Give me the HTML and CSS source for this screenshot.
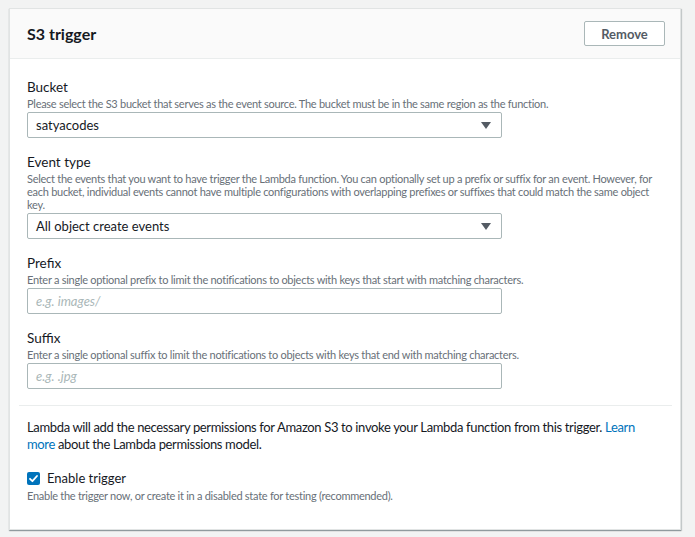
FILE: index.html
```html
<!DOCTYPE html>
<html>
<head>
<meta charset="utf-8">
<link rel="stylesheet" href="styles.css">
</head>
<body>
<div class="card">
  <div class="card-header">
    <h2 class="title">S3 trigger</h2>
    <button class="btn">Remove</button>
  </div>
  <div class="card-body">
    <div class="field">
      <div class="label">Bucket</div>
      <div class="desc">Please select the S3 bucket that serves as the event source. The bucket must be in the same region as the function.</div>
      <div class="select"><span>satyacodes</span><span class="caret"></span></div>
    </div>
    <div class="field">
      <div class="label">Event type</div>
      <div class="desc">Select the events that you want to have trigger the Lambda function. You can optionally set up a prefix or suffix for an event. However, for each bucket, individual events cannot have multiple configurations with overlapping prefixes or suffixes that could match the same object key.</div>
      <div class="select"><span>All object create events</span><span class="caret"></span></div>
    </div>
    <div class="field">
      <div class="label">Prefix</div>
      <div class="desc">Enter a single optional prefix to limit the notifications to objects with keys that start with matching characters.</div>
      <div class="input"><span class="ph">e.g. images/</span></div>
    </div>
    <div class="field">
      <div class="label">Suffix</div>
      <div class="desc">Enter a single optional suffix to limit the notifications to objects with keys that end with matching characters.</div>
      <div class="input"><span class="ph">e.g. .jpg</span></div>
    </div>
    <hr class="divider">
    <p class="info">Lambda will add the necessary permissions for Amazon S3 to invoke your Lambda function from this trigger. <a class="link">Learn</a><br><a class="link">more</a> about the Lambda permissions model.</p>
    <div class="check-row">
      <span class="checkbox"><svg width="13" height="13" viewBox="0 0 13 13"><path d="M3 6.8 L5.4 9.2 L10 4" fill="none" stroke="#fff" stroke-width="1.8" stroke-linecap="round" stroke-linejoin="round"/></svg></span>
      <span class="check-label">Enable trigger</span>
    </div>
    <div class="desc check-desc">Enable the trigger now, or create it in a disabled state for testing (recommended).</div>
  </div>
</div>
</body>
</html>
```
FILE: styles.css
```css
html, body {
  margin: 0;
  padding: 0;
}
body {
  background: #f2f3f3;
  font-family: Lato, "Open Sans", sans-serif;
  color: #16191f;
  padding: 8px 14px 8px 9px;
}
.card {
  background: #fff;
  border: 1px solid #e1e4e4;
  box-shadow: 0 1px 1px rgba(0,28,36,0.3), 1px 1px 1px rgba(0,28,36,0.15);
}
.card-header {
  height: 49px;
  background: #fafafa;
  border-bottom: 1px solid #eaeded;
  display: flex;
  align-items: center;
  justify-content: space-between;
  padding: 0 15px 0 17px;
}
.title {
  margin: 0;
  font-size: 16px;
  font-weight: 700;
  color: #16191f;
}
.btn {
  width: 81px;
  height: 25px;
  background: #fff;
  border: 1px solid #aab7b8;
  border-radius: 2px;
  font-family: inherit;
  font-size: 13px;
  font-weight: 700;
  color: #545b64;
  padding: 0;
}
.card-body {
  padding: 20px 8px 27px 9px;
}
.field {
  padding: 0 8px;
  margin-bottom: 16px;
}
.label {
  font-size: 13.5px;
  line-height: 16px;
  color: #16191f;
}
.desc {
  font-size: 11px;
  line-height: 13px;
  letter-spacing: -0.27px;
  color: #687078;
  margin-top: 2px;
}
.select, .input {
  height: 24px;
  margin-top: 2px;
  border: 1px solid #aab7b8;
  border-radius: 2px;
  display: flex;
  align-items: center;
  justify-content: space-between;
  padding: 0 10px 0 8px;
  box-sizing: content-box;
  width: 455px;
  font-size: 13px;
  color: #16191f;
}
.caret {
  width: 0;
  height: 0;
  border-left: 5px solid transparent;
  border-right: 5px solid transparent;
  border-top: 7px solid #545b64;
}
.ph {
  font-style: italic;
  color: #aab7b8;
}
.divider {
  border: 0;
  border-top: 1px solid #eaeded;
  margin: 0 0 13px 0;
}
.info {
  margin: 0 8px;
  font-size: 13px;
  line-height: 17px;
  letter-spacing: -0.35px;
}
.link {
  color: #0073bb;
}
.check-row {
  display: flex;
  align-items: center;
  margin: 17px 8px 0;
  gap: 7px;
}
.checkbox {
  width: 13px;
  height: 13px;
  background: #0073bb;
  border-radius: 2px;
  display: flex;
}
.check-label {
  font-size: 13px;
}
.check-desc {
  margin: 3px 8px 0;
}
```
